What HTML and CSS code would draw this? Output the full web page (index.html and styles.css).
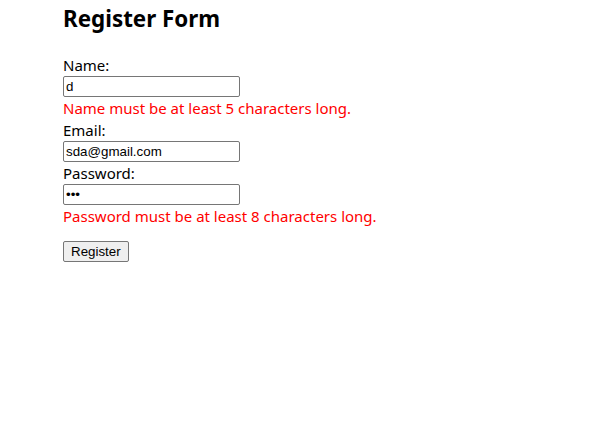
FILE: index.html
```
<!DOCTYPE html>
<html>
<head>
<meta charset="utf-8">
<link rel="stylesheet" href="styles.css">
</head>
<body>
<div class="page">
  <h2 class="title">Register Form</h2>
  <form class="form">
    <div class="field">
      <label class="label">Name:</label>
      <input class="input" type="text" value="d">
      <div class="error">Name must be at least 5 characters long.</div>
    </div>
    <div class="field">
      <label class="label">Email:</label>
      <input class="input" type="text" value="sda@gmail.com">
    </div>
    <div class="field">
      <label class="label">Password:</label>
      <input class="input" type="password" value="abc">
      <div class="error">Password must be at least 8 characters long.</div>
    </div>
    <button class="btn" type="button">Register</button>
  </form>
</div>
</body>
</html>
```
FILE: styles.css
```
html, body {
  margin: 0;
  padding: 0;
  background: #fff;
}
.page {
  padding: 0 0 0 63px;
  font-family: "Noto Sans", "Open Sans", sans-serif;
  font-size: 15px;
  color: #000;
}
.title {
  font-size: 22.4px;
  font-weight: bold;
  margin: 0 0 16px 0;
  line-height: 38px;
}
.form {
  display: flex;
  flex-direction: column;
  align-items: flex-start;
}
.field {
  display: flex;
  flex-direction: column;
  align-items: flex-start;
}
.label {
  line-height: 22px;
}
.input {
  box-sizing: border-box;
  width: 177px;
  height: 21px;
  margin: 0;
  padding: 1px 2px;
  border: 1px solid #767676;
  border-radius: 2px;
  font-family: "Liberation Sans", Arial, sans-serif;
  font-size: 13.33px;
  color: #000;
}
.error {
  color: #ff0000;
  line-height: 22px;
}
.btn {
  margin-top: 14px;
  box-sizing: border-box;
  height: 21px;
  padding: 1px 7px;
  border: 1px solid #767676;
  border-radius: 2px;
  background: #efefef;
  font-family: "Liberation Sans", Arial, sans-serif;
  font-size: 13.33px;
  color: #000;
}
```
